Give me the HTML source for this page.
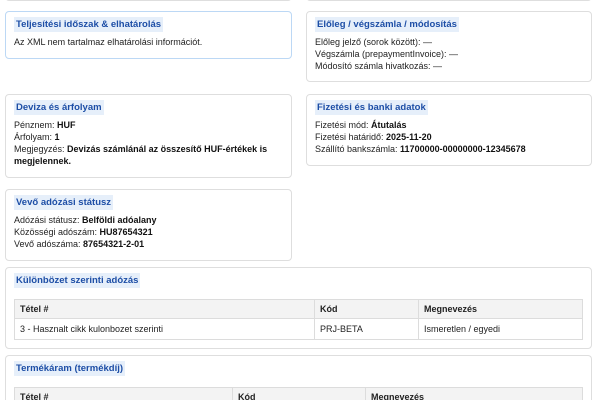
<!DOCTYPE html>
<html style="width:600px;height:400px;overflow:hidden"><head><meta charset="utf-8"><style>
*{margin:0;padding:0;box-sizing:border-box}
body{width:600px;height:400px;overflow:hidden;background:#fff;font-family:"Liberation Sans",Arial,sans-serif;font-size:9px;color:#222;position:relative}
.c{position:absolute;border:1px solid #dedede;border-radius:4px;background:#fff;padding:5px 8px}
.t{display:inline-block;background:#e6effa;color:#1d4ea6;font-weight:bold;font-size:9.5px;padding:1px 2px;line-height:13px;margin:0 0 4px}
.l{line-height:12px}
b{font-weight:bold;color:#111}
table{border-collapse:collapse;width:569px;margin-top:7px}
td,th{border:1px solid #dcdcdc;text-align:left;padding:0 5px;height:21px;font-size:9px}
th{background:#f3f3f3;font-weight:bold;height:19px}
</style></head><body>
<div class="c" style="left:5px;top:-20px;width:287px;height:21px"></div>
<div class="c" style="left:306px;top:-20px;width:286px;height:21px"></div>

<div class="c" style="left:5px;top:11px;width:287px;height:48px;border-color:#bcd8f5">
<div class="t">Teljesítési időszak &amp; elhatárolás</div>
<div class="l">Az XML nem tartalmaz elhatárolási információt.</div></div>

<div class="c" style="left:306px;top:11px;width:286px;height:71px">
<div class="t">Előleg / végszámla / módosítás</div>
<div class="l">Előleg jelző (sorok között): —</div>
<div class="l">Végszámla (prepaymentInvoice): —</div>
<div class="l">Módosító számla hivatkozás: —</div></div>

<div class="c" style="left:5px;top:94px;width:287px;height:84px">
<div class="t">Deviza és árfolyam</div>
<div class="l">Pénznem: <b>HUF</b></div>
<div class="l">Árfolyam: <b>1</b></div>
<div class="l">Megjegyzés: <b>Devizás számlánál az összesítő HUF-értékek is megjelennek.</b></div></div>

<div class="c" style="left:306px;top:94px;width:286px;height:72px">
<div class="t">Fizetési és banki adatok</div>
<div class="l">Fizetési mód: <b>Átutalás</b></div>
<div class="l">Fizetési határidő: <b>2025-11-20</b></div>
<div class="l">Szállító bankszámla: <b>11700000-00000000-12345678</b></div></div>

<div class="c" style="left:5px;top:189px;width:287px;height:72px">
<div class="t">Vevő adózási státusz</div>
<div class="l">Adózási státusz: <b>Belföldi adóalany</b></div>
<div class="l">Közösségi adószám: <b>HU87654321</b></div>
<div class="l">Vevő adószáma: <b>87654321-2-01</b></div></div>

<div class="c" style="left:5px;top:267px;width:587px;height:82px">
<div class="t">Különbözet szerinti adózás</div>
<table><tr><th style="width:300px">Tétel #</th><th style="width:104px">Kód</th><th>Megnevezés</th></tr>
<tr><td>3 - Hasznalt cikk kulonbozet szerinti</td><td>PRJ-BETA</td><td>Ismeretlen / egyedi</td></tr></table></div>

<div class="c" style="left:5px;top:355px;width:587px;height:45px;border-bottom:none;border-radius:4px 4px 0 0">
<div class="t">Termékáram (termékdíj)</div>
<table><tr><th style="width:218px">Tétel #</th><th style="width:133px">Kód</th><th>Megnevezés</th></tr></table></div>
</body></html>
